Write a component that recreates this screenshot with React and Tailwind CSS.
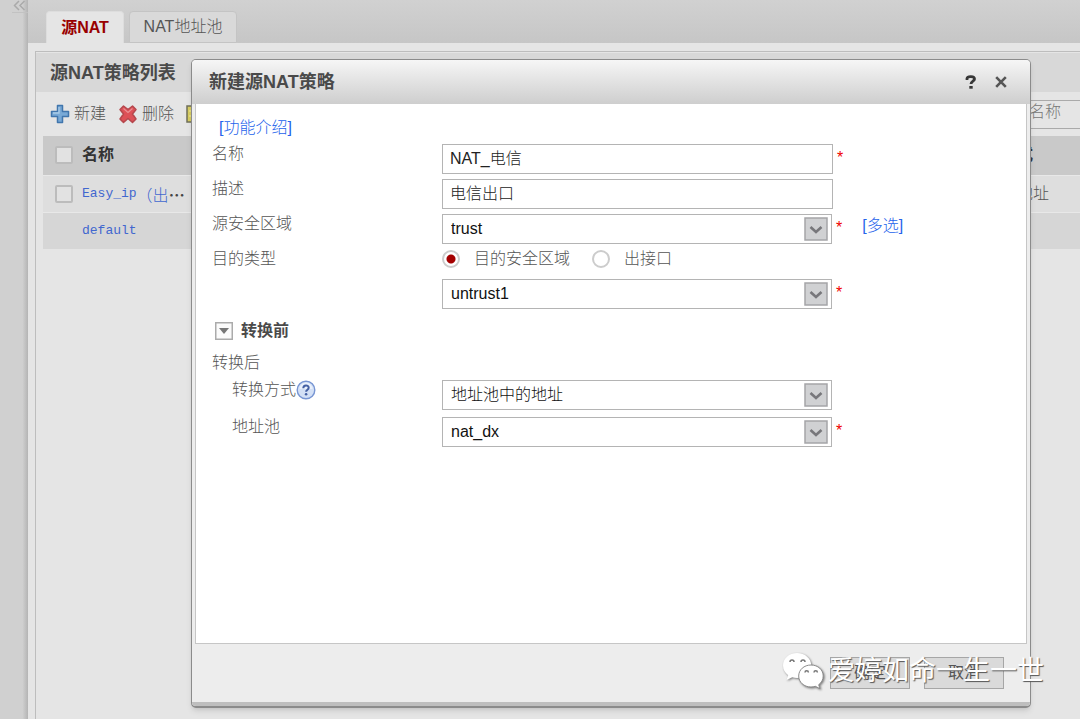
import React, { useState } from 'react';

const policies = [
    { name: 'Easy_ip', suffix: '（出', checkable: true, mode: '出接口地址', row: 'bg-[#dedede]' },
    { name: 'default', checkable: false, mode: '', row: 'bg-[#d6d6d6]' },
];

function PlusIcon() {
    return (
        <svg className="w-5 h-5" viewBox="0 0 20 20">
            <path d="M7.500 1.500h5v6h6v5h-6v6h-5v-6h-6v-5h6z" fill="#78a9d6" stroke="#4176ad" strokeWidth="1.500" strokeLinejoin="round" />
            <path d="M9 3v6H3" fill="none" stroke="#a9cbe8" strokeWidth="1.300" />
        </svg>
    );
}

function DeleteIcon() {
    return (
        <svg className="w-5 h-5" viewBox="0 0 20 20">
            <path d="M5.500 2l4.500 3.500L14.500 2l3.500 3.500-3.500 4.500 3.500 5-3.500 3.500-4.500-4-4.500 4L2 15l3.500-5L2 5.500z" fill="#dd5057" stroke="#b5484d" strokeWidth="1.500" strokeLinejoin="round" />
            <path d="M5.500 4.500l4.500 4 4.500-4" fill="none" stroke="#ea9094" strokeWidth="1.200" />
        </svg>
    );
}

function SheetIcon() {
    return (
        <svg className="w-5 h-5" viewBox="0 0 20 20">
            <rect x="1" y="2" width="18" height="16" fill="#d9cf62" stroke="#70705a" strokeWidth="1.500" />
            <path d="M3 7h14M3 12h14" stroke="#f0eaa8" />
        </svg>
    );
}

function HelpIcon() {
    return (
        <svg className="w-5 h-5" viewBox="0 0 20 20">
            <circle cx="10" cy="10" r="8.800" fill="#d3e0f6" stroke="#7795d3" strokeWidth="1.400" />
            <path d="M3.500 9a6.500 6.500 0 0 1 13 0z" fill="#eaf1fc" />
            <path d="M7.300 8.200c0-3.600 5.400-3.600 5.400-.4 0 2-2.600 1.900-2.600 4" fill="none" stroke="#4460a4" strokeWidth="2" />
            <circle cx="10.100" cy="14.300" r="1.300" fill="#4460a4" />
        </svg>
    );
}

function WechatIcon() {
    return (
        <svg className="w-[42px] h-[38px] drop-shadow-[1px_1px_1px_#777777]" viewBox="0 0 42 38">
            <path d="M15 1C7 1 1 6.500 1 13.500c0 4 2 7.400 5.200 9.700L4.500 28l5.700-2.800c1.600.4 3.200.7 4.800.7 8 0 14.300-5.400 14.300-12.400S23 1 15 1z" fill="#ffffff" />
            <path d="M29 13c-7 0-12.300 4.800-12.300 11S22 35 29 35c1.500 0 3-.3 4.300-.7l4.700 2.400-1.300-4c2.800-2 4.500-5 4.500-8.700 0-6.200-5.300-11-12.200-11z" fill="#ffffff" stroke="#8c8c8c" />
            <path d="M8 10a2 2 0 0 1 4 0M19 10a2 2 0 0 1 4 0M23 20.500a1.700 1.700 0 0 1 3.400 0M32 20.500a1.700 1.700 0 0 1 3.400 0" fill="none" stroke="#777777" strokeWidth="1.500" />
        </svg>
    );
}

function Required() {
    return <span className="ml-1 mt-1 text-base leading-5 text-[#f00000]">*</span>;
}

function FormRow({ label, htmlFor, help, indent, required, children }) {
    return (
        <div className="flex items-start">
            <div className={`flex w-[230px] shrink-0 items-center leading-5 ${indent ? 'pl-5' : ''}`}>
                <label htmlFor={htmlFor}>{label}</label>
                {help && <HelpIcon />}
            </div>
            {children}
            {required && <Required />}
        </div>
    );
}

function TextInput({ id, defaultValue }) {
    return (
        <input
            id={id}
            type="text"
            defaultValue={defaultValue}
            className="h-[30px] w-[391px] border border-[#b4b4b4] bg-white px-[7px] pb-1 text-[#222222] outline-none"
        />
    );
}

function SelectBox({ id, label, options }) {
    return (
        <div className="relative w-[390px]">
            <select
                id={id}
                aria-label={label}
                className="block h-[30px] w-full appearance-none border border-[#b4b4b4] bg-white px-2 pb-px text-[#111111] outline-none"
            >
                {options.map((option) => (
                    <option key={option}>{option}</option>
                ))}
            </select>
            <svg className="pointer-events-none absolute right-1 top-[3px] w-6 h-6" viewBox="0 0 24 24">
                <rect x="1" y="1" width="22" height="22" fill="#d0d1d3" stroke="#a5a5a8" strokeWidth="1.500" />
                <path d="M6.500 10l5.500 5 5.500-5" fill="none" stroke="#77777b" strokeWidth="2.600" />
            </svg>
        </div>
    );
}

function RadioOption({ label, checked, onChange }) {
    return (
        <label className="flex items-center gap-[14px] leading-5">
            <input
                type="radio"
                name="destType"
                checked={checked}
                onChange={onChange}
                className="size-[18px] appearance-none rounded-full border-2 border-[#cccccc] bg-white checked:bg-[radial-gradient(circle,#a40000_0_4px,#ffffff_5px)]"
            />
            {label}
        </label>
    );
}

function PolicyDialog() {
    const [destType, setDestType] = useState('zone');

    return (
        <div
            role="dialog"
            aria-label="新建源NAT策略"
            className="rounded-[5px] border border-b-2 border-[#8b8b8b] bg-[#ededed] shadow-md"
        >
            <div className="flex h-11 items-center rounded-t bg-linear-to-b from-[#f6f6f6] to-[#cecece] pl-[17px] pr-[19px]">
                <h2 className="flex-1 text-lg font-bold text-[#4a4a4a]">新建源NAT策略</h2>
                <button type="button" aria-label="帮助" className="mr-[10px] p-1">
                    <svg className="w-3 h-[14px]" viewBox="0 0 12 14">
                        <path d="M2 5V3.500C2.500 1 9.500 1 9.500 4c0 2.200-3.500 2-3.500 5" fill="none" stroke="#383838" strokeWidth="2.800" />
                        <rect x="4.300" y="11" width="3.400" height="2.700" fill="#383838" />
                    </svg>
                </button>
                <button type="button" aria-label="关闭" className="p-1">
                    <svg className="w-3 h-3" viewBox="0 0 12 12">
                        <path d="M1.200 1.200l9.600 9.600M10.800 1.200l-9.600 9.600" stroke="#555555" strokeWidth="2.600" />
                    </svg>
                </button>
            </div>

            <div className="mx-[3px] min-h-[540px] border-x border-b border-[#c6c6c6] bg-white pl-4 pt-[14px] font-light text-[#555555]">
                <a href="#intro" className="block w-fit pl-[7px] leading-5 text-[#2563eb]">[功能介绍]</a>

                <div className="mt-[6px] flex flex-col gap-[5px]">
                    <FormRow label="名称" htmlFor="name" required>
                        <TextInput id="name" defaultValue="NAT_电信" />
                    </FormRow>
                    <FormRow label="描述" htmlFor="desc">
                        <TextInput id="desc" defaultValue="电信出口" />
                    </FormRow>
                    <FormRow label="源安全区域" htmlFor="srcZone">
                        <SelectBox id="srcZone" options={['trust', 'untrust', 'dmz']} />
                        <Required />
                        <a href="#multi" className="ml-5 leading-6 text-[#2563eb]">[多选]</a>
                    </FormRow>
                    <FormRow label="目的类型">
                        <div className="flex gap-[22px]">
                            <RadioOption label="目的安全区域" checked={destType === 'zone'} onChange={() => setDestType('zone')} />
                            <RadioOption label="出接口" checked={destType === 'interface'} onChange={() => setDestType('interface')} />
                        </div>
                    </FormRow>
                </div>

                <div className="mt-[10px] flex items-start pl-[230px]">
                    <SelectBox id="destZone" label="目的安全区域" options={['untrust1', 'trust']} />
                    <Required />
                </div>

                <button type="button" className="mt-3 flex items-center gap-2 pl-[3px] font-bold leading-5 text-[#4a4a4a]">
                    <svg className="w-[18px] h-[18px]" viewBox="0 0 18 18">
                        <rect x="0.750" y="0.750" width="16.500" height="16.500" fill="#fbfbfb" stroke="#ababab" strokeWidth="1.500" />
                        <path d="M4 6h10l-5 6z" fill="#777777" />
                    </svg>
                    转换前
                </button>
                <div className="mt-3 leading-5">转换后</div>

                <div className="mt-[7px] flex flex-col gap-[7px]">
                    <FormRow label="转换方式" htmlFor="mode" indent help>
                        <SelectBox id="mode" options={['地址池中的地址', '出接口地址']} />
                    </FormRow>
                    <FormRow label="地址池" htmlFor="pool" indent required>
                        <SelectBox id="pool" options={['nat_dx']} />
                    </FormRow>
                </div>
            </div>

            <div className="flex h-[58px] items-center justify-end gap-[14px] pr-[26px]">
                <button type="button" className="h-8 w-20 border border-[#a6a6a6] bg-[#dadada] text-[#555555]">确定</button>
                <button type="button" className="h-8 w-20 border border-[#a6a6a6] bg-[#dadada] text-[#555555]">取消</button>
            </div>
            <div className="h-1 rounded-b bg-[#bebebe]" />
        </div>
    );
}

export default function App() {
    return (
        <div className="relative flex min-h-screen overflow-hidden bg-[#e5e5e5] font-['Liberation_Sans','Noto_Sans_CJK_SC',sans-serif] text-base text-[#555555]">
            {/* Collapsed sidebar */}
            <aside className="w-7 shrink-0 bg-linear-to-r from-[#d0d0d0] from-80% to-[#b4b4b4]">
                <button type="button" aria-label="展开" className="ml-3 flex h-[13px] w-4 border-b border-[#c2c2c2]">
                    <svg className="w-4 h-3" viewBox="0 0 16 12">
                        <path d="M7 1L2.500 5.500 7 10M12.500 1L8 5.500l4.500 4.500" fill="none" stroke="#aaaaaa" strokeWidth="1.500" />
                    </svg>
                </button>
            </aside>

            <main className="min-w-0 flex-1">
                <nav className="flex h-[43px] items-end gap-[5px] bg-linear-to-b from-[#d1d1d1] to-[#c6c6c6] pl-[18px]">
                    <a href="#source" className="flex h-8 w-[78px] items-center justify-center rounded-t border border-b-0 border-[#dddddd] bg-[#e5e5e5] font-bold text-[#990000]">源NAT</a>
                    <a href="#pool" className="flex h-8 w-[108px] items-center justify-center rounded-t border border-[#c4c4c4] bg-[#d9d9d9] font-light">NAT地址池</a>
                </nav>

                <section className="ml-[7px] mt-2 min-h-[668px] border-l border-t border-[#bdbdbd] pt-px">
                    <h1 className="flex h-[39px] items-center bg-[#d8d8d8] pl-[14px] text-lg font-bold text-[#4a4a4a]">源NAT策略列表</h1>

                    <div className="flex h-11 items-center pl-[14px] font-light">
                        <button type="button" className="flex w-[68px] items-center gap-1"><PlusIcon />新建</button>
                        <button type="button" className="flex w-[68px] items-center gap-1"><DeleteIcon />删除</button>
                        <button type="button" className="flex items-center gap-1"><SheetIcon />复制</button>
                        <input
                            type="text"
                            aria-label="名称"
                            placeholder="请输入名称"
                            className="-mr-5 ml-auto h-[29px] w-[124px] border border-[#aaaaaa] bg-[#e5e5e5] pb-1 pl-1 placeholder:text-[#777777]"
                        />
                    </div>

                    <table className="ml-[7px] w-[calc(100%-7px)] table-fixed">
                        <thead>
                            <tr className="h-[39px] bg-[#c9c9c9] text-[#333333]">
                                <th className="w-[39px] pl-3 text-left">
                                    <input type="checkbox" aria-label="全选" className="block size-[18px] appearance-none rounded-xs border-2 border-[#bcbcbc] bg-[#e2e2e2]" />
                                </th>
                                <th className="text-left font-bold">名称</th>
                                <th className="w-[111px] text-left font-bold">转换方式</th>
                            </tr>
                        </thead>
                        <tbody>
                            {policies.map((policy) => (
                                <tr key={policy.name} className={`h-[37px] border-t border-[#e8e8e8] ${policy.row}`}>
                                    <td className="pl-3">
                                        {policy.checkable && (
                                            <input type="checkbox" aria-label={policy.name} className="block size-[18px] appearance-none rounded-xs border-2 border-[#bcbcbc] bg-[#e2e2e2]" />
                                        )}
                                    </td>
                                    <td className="font-['Liberation_Mono','Noto_Sans_CJK_SC',monospace] text-[13px] text-[#4167cf]">
                                        <a href="#policy" className="flex items-center">
                                            {policy.name}
                                            {policy.suffix && (
                                                <span className="font-['Noto_Sans_CJK_SC',sans-serif] text-base font-light">
                                                    {policy.suffix}
                                                    <span className="font-bold text-[#444444]">⋯</span>
                                                </span>
                                            )}
                                        </a>
                                    </td>
                                    <td className="font-light">{policy.mode}</td>
                                </tr>
                            ))}
                        </tbody>
                    </table>
                </section>
            </main>

            <div className="absolute left-[191px] right-[49px] top-[59px]">
                <PolicyDialog />
            </div>

            {/* Account watermark over the footer */}
            <div className="pointer-events-none absolute bottom-7 right-9 flex items-center gap-1 text-white">
                <WechatIcon />
                <span className="text-[27px] leading-10 [text-shadow:1px_1px_1px_#555555]">爱婷如命一生一世</span>
            </div>
        </div>
    );
}
